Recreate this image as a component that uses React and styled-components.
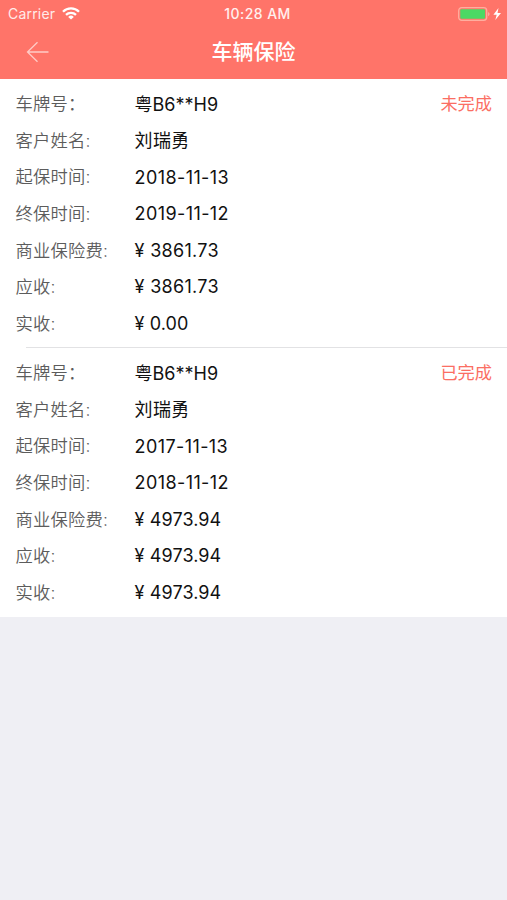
import styled, { createGlobalStyle } from "styled-components";

const GlobalStyle = createGlobalStyle`
  * {
    box-sizing: border-box;
  }

  body {
    margin: 0;
    background: #efeff4;
    font-family: Inter, "Noto Sans CJK SC", sans-serif;
  }
`;

const Screen = styled.div`
  width: 100%;
  min-height: 100vh;
  background: #efeff4;
`;

const Header = styled.header`
  height: 79px;
  background: #ff7469;
  color: #fff;
`;

const StatusBar = styled.div`
  display: grid;
  grid-template-columns: 1fr auto 1fr;
  align-items: center;
  height: 27px;
  padding: 0 5px 0 8px;
  font-size: 14px;
  line-height: 27px;
`;

const Carrier = styled.div`
  display: flex;
  align-items: center;
  gap: 7px;
  color: #ffebe9;
  letter-spacing: 0.2px;
`;

const Clock = styled.div`
  padding: 1px 0 0 5px;
  font-size: 14px;
  font-weight: 500;
  line-height: 26px;
  letter-spacing: 0.45px;
  color: #fff0ee;
`;

const Battery = styled.div`
  display: flex;
  justify-content: flex-end;
`;

const NavBar = styled.div`
  display: grid;
  grid-template-columns: 1fr auto 1fr;
  align-items: center;
  height: 50px;
  padding: 0 26px;
`;

const BackIcon = styled.svg`
  display: block;
`;

const Title = styled.h1`
  margin: 0;
  font-size: 21px;
  font-weight: 500;
  line-height: 50px;
`;

const Policy = styled.section`
  height: 269px;
  padding-top: 6px;
  background: #fff;
`;

const Divider = styled.div`
  height: 1px;
  margin: -1px 0 0 26px;
  background: #e2e2e4;
`;

const Row = styled.div`
  display: flex;
  align-items: center;
  height: 36.6px;
  padding: 0 15px 0 15.6px;
  white-space: pre;
`;

const Label = styled.span`
  width: 119px;
  padding-bottom: 1px;
  font-size: 17.3px;
  font-weight: 350;
  letter-spacing: 0.2px;
  color: #5c5c5c;
`;

const Value = styled.span`
  flex: 1;
  padding-top: ${({ $numeric }) => ($numeric ? "1.4px" : "0")};
  padding-bottom: ${({ $numeric }) => ($numeric ? "0" : "1px")};
  font-size: 18px;
  letter-spacing: ${({ $spacing }) => $spacing || 0}px;
  color: #111;
`;

const Status = styled.span`
  padding-bottom: 1px;
  font-size: 17.2px;
  color: #fb6e63;
`;

const policies = [
  {
    status: "未完成",
    rows: [
      ["车牌号：", "粤B6**H9"],
      ["客户姓名:", "刘瑞勇", 0.3],
      ["起保时间:", "2018-11-13", 0.4],
      ["终保时间:", "2019-11-12", 0.4],
      ["商业保险费:", "¥ 3861.73", 0.3],
      ["应收:", "¥ 3861.73", 0.3],
      ["实收:", "¥ 0.00", 0.1],
    ],
  },
  {
    status: "已完成",
    rows: [
      ["车牌号：", "粤B6**H9"],
      ["客户姓名:", "刘瑞勇", 0.3],
      ["起保时间:", "2017-11-13", 0.4],
      ["终保时间:", "2018-11-12", 0.4],
      ["商业保险费:", "¥ 4973.94", 0.1],
      ["应收:", "¥ 4973.94", 0.1],
      ["实收:", "¥ 4973.94", 0.1],
    ],
  },
];

const App = () => {
  return (
    <Screen>
      <GlobalStyle />
      <Header>
        <StatusBar>
          <Carrier>
            Carrier
            <svg width="18" height="13" viewBox="0 0 18 13" fill="none" stroke="#fff" strokeWidth="2.3">
              <path d="M1 4.7a11.3 11.3 0 0 1 16 0" />
              <path d="M4 7.9a7.1 7.1 0 0 1 10 0" />
              <path d="M9 12.6 6.2 9.9a4 4 0 0 1 5.6 0z" fill="#fff" stroke="none" />
            </svg>
          </Carrier>
          <Clock>10:28 AM</Clock>
          <Battery>
            <svg width="44" height="14" viewBox="0 0 44 14">
              <rect x="0.7" y="0.7" width="28" height="12.6" rx="3" fill="none" stroke="#ffae9f" strokeWidth="1.3" />
              <rect x="2.3" y="2.3" width="24.8" height="9.4" rx="1.2" fill="#4cd964" />
              <path d="M30.2 5v4.2c1.8-.8 1.8-3.4 0-4.2z" fill="#ffb5ae" />
              <path d="M40.5 1 35.4 7.7h3.3L37.3 13 43 5.9h-3.5z" fill="#fff" />
            </svg>
          </Battery>
        </StatusBar>
        <NavBar>
          <BackIcon width="24" height="22" viewBox="0 0 24 22" fill="none" stroke="#ffcbc6" strokeWidth="1.3">
            <path d="M22.5 11H1.5M11.5 1.2 1.5 11l10 9.8" />
          </BackIcon>
          <Title>车辆保险</Title>
        </NavBar>
      </Header>

      {policies.map((policy, index) => (
        <div key={index}>
          {index > 0 && <Divider />}
          <Policy>
            {policy.rows.map(([label, value, spacing], i) => (
              <Row key={i}>
                <Label>{label}</Label>
                <Value $numeric={i > 1} $spacing={spacing}>
                  {value}
                </Value>
                {i === 0 && <Status>{policy.status}</Status>}
              </Row>
            ))}
          </Policy>
        </div>
      ))}
    </Screen>
  );
};

export default App;
